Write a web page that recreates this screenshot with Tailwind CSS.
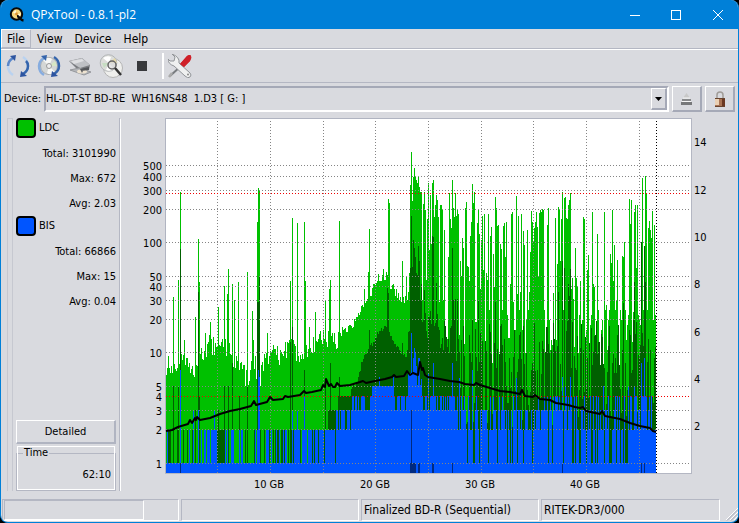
<!DOCTYPE html>
<html lang="en">
<head>
<meta charset="utf-8">
<title>QPxTool - 0.8.1-pl2</title>
<script src="https://cdn.jsdelivr.net/npm/@tailwindcss/browser@4"></script>
</head>
<body class="bg-black">
<div class="flex h-screen flex-col overflow-hidden rounded-lg border-x border-b border-[#0080d8] bg-[#d9dadf] font-['DejaVu_Sans_Condensed','DejaVu_Sans',sans-serif] text-[11px] leading-4 text-black">

  <header class="flex h-[29px] shrink-0 items-center bg-[#0080d8] pl-2 text-white">
    <svg class="mr-1.5 size-4" viewBox="0 0 16 16" aria-hidden="true">
      <circle cx="7.5" cy="7" r="5.7" fill="#f6d67c" stroke="#080808" stroke-width="2"/>
      <path d="M4 5.500 7 3v4zM8 8l4-2-1.500 4z" fill="#fff8dc"/>
      <path d="M8 9c2 0 3 4 6.500 4.500" fill="none" stroke="#080808" stroke-width="2.500"/>
      <circle cx="7.500" cy="7" r="1.400" fill="#d89030"/>
    </svg>
    <h1 class="grow font-['Open_Sans',sans-serif] text-xs">QPxTool - 0.8.1-pl2</h1>
    <button class="flex h-full w-10 items-center justify-center" aria-label="Minimize"><svg class="size-[10px]" viewBox="0 0 10 10" stroke="#fff" shape-rendering="crispEdges"><path d="M0 5.500H10"/></svg></button>
    <button class="flex h-full w-[42px] items-center justify-center" aria-label="Maximize"><svg class="size-[10px]" viewBox="0 0 10 10" fill="none" stroke="#fff"><rect x=".5" y=".5" width="9" height="9"/></svg></button>
    <button class="flex h-full w-[41px] items-center justify-center" aria-label="Close"><svg class="size-[10px]" viewBox="0 0 10 10" stroke="#fff"><path d="M0 0 10 10M10 0 0 10"/></svg></button>
  </header>

  <nav class="flex h-5 shrink-0 border-b border-[#b4b7c3] text-xs">
    <button class="border border-t-white border-r-[#b4b7c3] border-b-[#b4b7c3] border-l-white px-[5px]">File</button>
    <button class="px-1.5">View</button>
    <button class="px-1.5">Device</button>
    <button class="px-1.5">Help</button>
  </nav>

  <div class="flex h-[34px] shrink-0 items-center border-t border-b border-t-white border-b-[#b4b7c3] pl-px" role="toolbar">
    <button class="flex w-[31px] justify-center" aria-label="Rescan"><svg class="size-6" viewBox="0 0 24 24" fill="none"><path d="M7 4Q2 7 2 12q0 6 5 9" stroke="#b9d2f0" stroke-width="2.500"/><path d="M7 4Q2 7 2 12" stroke="#5a86c8" stroke-width="2.500"/><path d="m4 2 6-1-1 6z" fill="#2c54a0"/><path d="M17 20q5-3 5-8 0-6-5-9" stroke="#b9d2f0" stroke-width="2.500"/><path d="M17 20q5-3 5-8 0-3-2-5" stroke="#3464ac" stroke-width="2.500"/><path d="m21 22-7 1 1-6z" fill="#2c54a0"/></svg></button>
    <button class="flex w-[31px] justify-center" aria-label="Rescan media"><svg class="size-6" viewBox="0 0 24 24" fill="none"><circle cx="12" cy="12" r="8.500" fill="#d4d6d5" stroke="#a4a8ac"/><path d="m12 12-6-6q5-4 9-1zM12 12l6 6q-5 4-8 1z" fill="#f7f7f5"/><path d="m12 12 6-5 2 5z" fill="#d7e7c4"/><circle cx="12" cy="12" r="2.500" fill="#eee" stroke="#999"/><path d="M7 4Q2 7 2 12q0 6 5 9" stroke="#86acdf" stroke-width="2.500"/><path d="m4 2 6-1-1 6z" fill="#3464ac"/><path d="M17 20q5-3 5-8 0-6-5-9" stroke="#3464ac" stroke-width="2.500"/><path d="m21 22-7 1 1-6z" fill="#2c54a0"/></svg></button>
    <button class="flex w-[31px] justify-center" aria-label="Device info"><svg class="size-6" viewBox="0 0 24 24"><path d="m1 7 13-3 8 7-1 5-10 1z" fill="#7b7d81"/><path d="m1 7 13-3 8 7-10 3z" fill="#bfc1c5"/><path d="m3 7 11-2 2 2-10 3z" fill="#dedfe2"/><path d="m2 16 9-2 12 4-7 3z" fill="#b4b6ba" stroke="#96989c"/><ellipse cx="14" cy="17.500" rx="5" ry="2" fill="#eee3d1"/><circle cx="14" cy="17.500" r="1" fill="#777"/><path d="m12 15 9-2v3l-8 1z" fill="#54565a"/></svg></button>
    <button class="flex w-[31px] justify-center" aria-label="Scan"><svg class="size-6" viewBox="0 0 24 24"><circle cx="14" cy="14" r="9.500" fill="#efefed" stroke="#b4b4b4"/><circle cx="9.500" cy="9" r="8.300" fill="#dcddda" stroke="#b1b4b6"/><path d="M10 9 4 4q4-3 8-1zM10 9l5 6q-4 3-8 1z" fill="#fff"/><path d="m10 9 6-5 2 5z" fill="#e5d9aa"/><path d="m10 9-7 0 2 5z" fill="#c7ddc3"/><circle cx="13" cy="11" r="4" fill="#ddd" fill-opacity=".7" stroke="#666" stroke-width="1.500"/><path d="m16 14 6 7" stroke="#333" stroke-width="2.500"/></svg></button>
    <button class="flex w-[31px] justify-center" aria-label="Stop"><span class="size-[10px] bg-[#38393c]"></span></button>
    <span class="mr-1 ml-[5px] h-[26px] border-l-2 border-white"></span>
    <button class="flex justify-center" aria-label="Preferences"><svg class="size-6" viewBox="0 0 24 24"><path d="m2 22 11-10" stroke="#787b7f" stroke-width="2"/><path d="m1 23 3-4" stroke="#aaa" stroke-width="2.500"/><path d="M12 10 19 2q3-2 4 0t-1 5l-6 6-3-1z" fill="#cf2029"/><path d="m14 9 6-6" stroke="#f07878"/><path d="M4 0 7 3 6 7 2 7 0 5q0 5 6 7l11 10q3 3 5 1t0-4L11 9Q12 3 4 0z" fill="#eff0f0" stroke="#909397"/><path d="M12 10 19 2q3-2 4 0t-1 5l-6 6z" fill="#cf2029"/><circle cx="20" cy="20.500" r="1" fill="#888"/></svg></button>
  </div>

  <div class="flex h-8 shrink-0 items-center gap-[3px] px-[3px]">
    <label for="device" class="w-[37px] shrink-0">Device:</label>
    <div class="relative h-[26px] grow">
      <select id="device" class="h-full w-full appearance-none border-2 border-t-[#a5a9b7] border-r-white border-b-white border-l-[#a5a9b7] bg-[#d9dadf]"><option>HL-DT-ST BD-RE&nbsp; WH16NS48&nbsp; 1.D3 [ G: ]</option></select>
      <span class="pointer-events-none absolute top-0.5 right-0.5 flex h-[22px] w-4 items-center justify-center border-t border-r-2 border-b-2 border-l border-t-white border-r-[#a5a9b7] border-b-[#a5a9b7] border-l-white"><svg class="h-1 w-[7px]" viewBox="0 0 7 4"><path d="M0 0H7L3.500 4z"/></svg></span>
    </div>
    <button class="flex h-[26px] w-[30px] shrink-0 items-center justify-center border border-r-2 border-b-2 border-t-white border-r-[#a5a9b7] border-b-[#a5a9b7] border-l-white" aria-label="Eject"><svg class="h-3 w-[11px]" viewBox="0 0 11 12"><path d="M5.500 0 9 5H2z" fill="#c8c8c8"/><path d="M1 6h9v2H1z" fill="#88898b"/><path d="M0 9h11v3H0z" fill="#77787a"/><path d="M2 5h7M1 8.500h9" stroke="#f6f6f6"/></svg></button>
    <button class="flex h-[26px] w-[30px] shrink-0 items-center justify-center border border-r-2 border-b-2 border-t-white border-r-[#a5a9b7] border-b-[#a5a9b7] border-l-white" aria-label="Lock"><svg class="h-4 w-3" viewBox="0 0 12 16"><path d="M3 8V4q0-3 3-3t3 3v4" fill="none" stroke="#a09c98" stroke-width="1.500"/><path d="M1 7h10v8H1z" fill="#a87252"/><path d="M1 8h4v6H1z" fill="#ead0b4"/><path d="M8 8h3v7H8z" fill="#6a3822"/><path d="M1 15.500h10M1 7.500h10" stroke="#68442f"/></svg></button>
  </div>

  <main class="flex min-h-0 grow">
    <div class="mt-[3px] mb-2 ml-[6px] w-[6px] shrink-0 border-x border-t border-[#c6c8d0]"></div>
    <aside class="mt-[3px] mb-2 ml-[3px] flex w-[100px] shrink-0 flex-col">
      <section>
        <h2 class="mb-[3px] flex h-5 items-center gap-[3px]"><span class="size-5 rounded-[4px] border-2 border-black bg-[#00c000]"></span>LDC</h2>
        <p class="h-[25px] text-right leading-[25px]">Total: 3101990</p>
        <p class="h-[25px] text-right leading-[25px]">Max: 672</p>
        <p class="h-[25px] text-right leading-[25px]">Avg: 2.03</p>
      </section>
      <section>
        <h2 class="mb-[3px] flex h-5 items-center gap-[3px]"><span class="size-5 rounded-[4px] border-2 border-black bg-[#0055ff]"></span>BIS</h2>
        <p class="h-[25px] text-right leading-[25px]">Total: 66866</p>
        <p class="h-[25px] text-right leading-[25px]">Max: 15</p>
        <p class="h-[25px] text-right leading-[25px]">Avg: 0.04</p>
      </section>
      <button class="mt-auto h-6 shrink-0 border border-r-2 border-b-2 border-t-white border-r-[#b0b4c1] border-b-[#b0b4c1] border-l-white">Detailed</button>
      <fieldset class="mt-px h-[46px] shrink-0 border border-[#b4b7c3] px-1 outline-1 -outline-offset-2 outline-white">
        <legend class="ml-0.5 bg-[#d9dadf] px-px">Time</legend>
        <span class="block pt-1.5 text-right">62:10</span>
      </fieldset>
    </aside>
    <div class="mt-[3px] mb-2 ml-[3px] w-0.5 shrink-0 border-t border-r border-l border-t-[#b4b7c3] border-r-white border-l-[#b4b7c3]"></div>

    <svg id="chart" class="h-full min-w-0 grow" viewBox="121 115 617 384" preserveAspectRatio="none" font-size="11" role="img" aria-label="LDC and BIS error rates with read speed">
      <g shape-rendering="crispEdges">
        <path d="M165.500 473V118.500H691" fill="none" stroke="#b0b4c1"/>
        <path d="M691.500 118V473.500H165" fill="none" stroke="#b4b7c3"/>
        <rect x="166" y="119" width="525" height="354" fill="#fff"/>
        <path id="ldc-max" fill="#00c000"/>
        <path id="ldc-avg" fill="#006000"/>
        <path id="bis-max" fill="#0055ff"/>
        <path id="bis-avg" fill="#002a80"/>
        <path id="grid" fill="none" stroke="#858585" stroke-dasharray="1 2"/>
        <path d="M166 193.500H690M166 396.500H690" stroke="#f00000" stroke-dasharray="1 2"/>
        <path d="M656.500 121V473" stroke="#000" stroke-dasharray="1 2"/>
      </g>
      <path fill="none" stroke="#000" stroke-width="2" stroke-linejoin="round" d="M166 431 172 430 178 427 188 424 190 420 192 423 195 418 196 420 197 417 200 420 210 418 220 414 230 411 240 409 251 406 254 401 256 405 267 402 270 397 273 400 283 399 285 396 288 397 300 395 304 391 306 393 312 392 321 390 323 385 325 387 326 379 329 386 331 384 333 387 335 387 337 383 340 386 350 385 360 382 363 381 366 383 375 381 385 379 392 377 394 375 396 377 404 376 407 371 410 375 413 373 418 375 420 362 422 370 423 368 425 375 428 377 440 379 450 381 459 382 465 384 474 385 476 383 480 385 490 388 500 391 510 392 520 394 522 390 525 396 533 397 535 395 540 399 550 400 556 403 568 405 575 407 580 408 583 407 586 411 600 414 602 411 605 416 620 419 630 423 640 426 650 428 653 431 656 432"/>
      <g id="axis-left" text-anchor="end"></g>
      <g id="axis-right"></g>
      <g id="axis-bottom" text-anchor="middle"></g>
    </svg>
  </main>

  <footer class="mr-[18px] mb-px ml-px flex h-[22px] shrink-0 text-xs leading-5">
    <div class="w-[177px] shrink-0 border border-t-[#b4b7c3] border-r-white border-b-white border-l-[#b4b7c3] pl-px"><div class="h-full w-[140px] border border-t-[#b4b7c3] border-r-white border-b-white border-l-[#b4b7c3]"></div></div>
    <div class="ml-0.5 w-[178px] shrink-0 border border-t-[#b4b7c3] border-r-white border-b-white border-l-[#b4b7c3]"></div>
    <div class="ml-0.5 w-[178px] shrink-0 border border-t-[#b4b7c3] border-r-white border-b-white border-l-[#b4b7c3] px-0.5 whitespace-nowrap">Finalized BD-R (Sequential)</div>
    <div class="ml-0.5 grow border border-t-[#b4b7c3] border-r-white border-b-white border-l-[#b4b7c3] px-0.5">RITEK-DR3/000</div>
    <svg class="-mr-[18px] ml-[6px] h-full w-3 shrink-0" viewBox="0 0 12 22" aria-hidden="true"><path d="M0 21 12 9M4 21l8-8M8 21l4-4" stroke="#fff"/><path d="M1 21.500 12 10.500M5 21.500l7-7" stroke="#a5a9b7"/></svg>
  </footer>
</div>

<script>
  const X0 = 166, X1 = 656, BOTTOM = 473;
  const noise = (x, s) => { let n = Math.imul(x * 31 + s * 977, 2654435761); n ^= n >>> 13; n = Math.imul(n, 1274126177); n ^= n >>> 16; return (n >>> 0) / 4294967296; };

  // "x:y y y" gives the tops of consecutive one-pixel columns starting at x.
  function tops(text) {
    const out = {};
    for (const run of text.trim().split(/\s*;\s*/)) {
      const [x, ys] = run.split(':');
      ys.trim().split(/\s+/).forEach((y, i) => { out[+x + i] = +y; });
    }
    return out;
  }
  function curve(points, x) {
    let i = 0;
    while (i < points.length - 2 && points[i + 1][0] <= x) i++;
    const [a, b] = [points[i], points[i + 1]];
    return a[1] + (b[1] - a[1]) * Math.min(1, Math.max(0, (x - a[0]) / (b[0] - a[0])));
  }
  function draw(id, base, fixed) {
    let d = '';
    for (let x = X0; x < X1; x++) {
      const y = Math.round(fixed[x] ?? base(x));
      if (y < BOTTOM) d += `M${x} ${y}h1V${BOTTOM}h-1z`;
    }
    document.getElementById(id).setAttribute('d', d);
  }

  const ldcBase = [[166,369],[168,357],[172,372],[178,366],[184,355],[190,365],[196,370],[200,363],[204,350],[210,345],[216,352],[224,342],[230,355],[236,368],[242,374],[248,376],[254,366],[260,376],[265,358],[270,352],[275,358],[282,356],[290,346],[298,360],[306,352],[312,346],[320,338],[330,342],[337,342],[340,334],[346,330],[352,326],[358,314],[364,303],[367,299],[370,293],[375,284],[380,279],[385,277],[390,284],[395,292],[400,297],[406,300],[409,292],[422,300],[656,300]];
  draw('ldc-max', x => {
    if (x > 421) return 300 + noise(x, 1) * 22;
    const amp = x < 340 ? 22 : 7;
    return curve(ldcBase, x) + (noise(x, 2) - 0.55) * amp;
  }, tops(`173:297;178:280;180:192;184:340;195:317;198:239 282;205:333;210:322;213:337;218:307;224:286;227:294 269;232:284;234:300;238:282;247:272;245:386;252:311;253:340;257:222 188 190;260:386;
    267:333;290:281;292:218;297:223;304:222 281;309:327;315:312;316:341;325:300;329:289 280;339:221;342:327;364:289;367:299 272 229 296 296 288 284 284 285 283 281 274 281 281 281 275 269 280 280 272 275 199 203 289 289 285 284 289 296 289 298 293 300 297 302;402:261 297 303 296;406:276 300 292 273 185 152 201 177 168 177 180 183 176 187 192 192 300 204 192 210 280 219 183 250 195 244 183 180 217 205 195 200 217 302 205 205 210 300 230 339 339 339 257 193 219 228 180 208 217 193 216 210 214 335 261 276 238 248 344 208 202 266 267 281 236 222 184 203 192 322 322 223 210 234 289 240 216 270 214 350 273 280 214 310 236 227 363 254 287 197 208 226 225 363 244 249 310 226 223 257 222 315 338 338 284 214 212 302 363 330 196 294 216 310 292 214 330 231 245 353 320 230 310 292 252 211 222 241 228 222 212 227 276 213 210 212 209 210 310 370 365 225 208 320 350 340 345 293 353 218 340 264 207 209 261 219 192 310 198 197 218 219 205 200 193 289 278 299 347 248 278 286 353 315 281 325 320 217 219 365 330 270 255 343 325 315 212 284 287 350 360 234 310 375 365 330 320 365 212 310 305 350 320 310 254 263 210 281 245 310 300 260 352 370 310 320 256 257 242 310 340 325 315 199 224 200 342 312 212 205 268 205 315 320 325 363 178 310 250 176 193 310 228 221 230 238 211 320 225 315 217`));

  const avgBase = [[336,400],[348,396],[352,386],[358,377],[361,362],[366,350],[372,342],[378,330],[384,326],[389,328],[392,340],[398,347],[405,355],[409,345],[420,315],[430,325],[445,335],[460,350],[480,358]];
  draw('ldc-avg', x => {
    const r = noise(x, 3);
    if (x < 200) return r < 0.12 ? 430 : BOTTOM;
    if (x < 270) return r < 0.28 ? 430 : BOTTOM;
    if (x < 328) return r < 0.65 ? 430 : BOTTOM;
    if (x < 338) return r < 0.8 ? 410 : 430;
    if (x < 351) return 396;
    if (x < 422) return curve(avgBase, x) + Math.floor(r * 3) * 2;
    if (x < 460) return curve(avgBase, x) + (r - 0.5) * 34;
    return r < 0.6 ? 320 + noise(x, 4) * 55 : 386 + noise(x, 4) * 44;
  }, tops(`168:430 430 430;173:386;178:386;180:249;187:430;195:410;198:292 397;218:410 430 430 430 430 430 386;228:386;232:363;239:396;247:386;257:302 302 277;273:430;276:430 430;283:430 430 430 430;290:342;292:327;294:430 430 430;304:370;311:430 430;325:386;330:363;339:377;369:330;387:288 293;402:343;408:332 331 268 216 267 240 248 257 273 275 246 261 300 284 322 320 290;432:236 237;436:283;452:248 300 320 299;457:299;478:300;495:302;558:292;562:261;564:268;568:284 296 269;634:282;641:242;644:246 282;623:303`));

  draw('bis-max', x => {
    const r = noise(x, 5);
    if (x < 200) return r < 0.06 ? 430 : 463;
    if (x < 214) return r < 0.75 ? 430 : 463;
    if (x < 270) return r < 0.2 ? 430 : 463;
    if (x < 296) return r < 0.35 ? 430 : 463;
    if (x < 320) return r < 0.65 ? 430 : 463;
    if (x < 336) return r < 0.88 ? 430 : 463;
    if (x < 352) return r < 0.6 ? 410 : 430;
    if (x < 370) return r < 0.6 ? 396 : 410;
    if (x < 394) return r < 0.8 ? 386 : 396;
    if (x < 408) return r < 0.6 ? 396 : 410;
    if (x < 422) return 373 + Math.floor(r * 3) * 6;
    if (x < 438) return r < 0.65 ? 396 : 410;
    if (x < 460) return r < 0.3 ? 396 : r < 0.75 ? 410 : 430;
    if (x < 545) return r < 0.2 ? 396 : r < 0.63 ? 410 : r < 0.88 ? 430 : 463;
    if (x < 572) return r < 0.3 ? 396 : r < 0.65 ? 410 : r < 0.88 ? 430 : 463;
    if (x < 630) return r < 0.1 ? 396 : r < 0.2 ? 410 : r < 0.68 ? 430 : 463;
    return r < 0.25 ? 396 : r < 0.4 ? 410 : 430;
  }, tops(`180:370;193:410;198:410;214:411;232:430;239:430;258:370 377;268:430;292:410;297:411;304:396;379:377;393:377;410:373 333 373 358 348 353 366;418:358 358;428:373;433:363;452:363;459:378;472:370;516:378;562:377;565:386;570:377;603:386;628:386;634:386;641:363;644:358`));

  draw('bis-avg', () => BOTTOM, tops('180:463;410:463 410 463 463 463 463;418:463 463;432:463 463;452:463;562:463;641:463;644:463'));

  document.getElementById('grid').setAttribute('d',
    [165,176,190,209,242,276,286,300,319,352,386,410,429,463].map(y => `M166 ${y}.5H690`).join('') +
    [217,270,323,375,428,481,533,586,639].map(x => `M${x}.5 121V473`).join(''));

  function labels(id, items) {
    for (const [x, y, value] of items) {
      const t = document.createElementNS('http://www.w3.org/2000/svg', 'text');
      t.setAttribute('x', x); t.setAttribute('y', y); t.textContent = value;
      document.getElementById(id).append(t);
    }
  }
  labels('axis-left', [[170,500],[181,400],[195,300],[214,200],[247,100],[281,50],[291,40],[305,30],[324,20],[357,10],[391,5],[401,4],[415,3],[434,2],[468,1]].map(([y, v]) => [162, y, v]));
  labels('axis-right', [[146,14],[194,12],[241,10],[288,8],[336,6],[383,4],[430,2]].map(([y, v]) => [694, y, v]));
  labels('axis-bottom', [[269,10],[375,20],[480,30],[585,40]].map(([x, v]) => [x, 488, v + ' GB']));
</script>
</body>
</html>
